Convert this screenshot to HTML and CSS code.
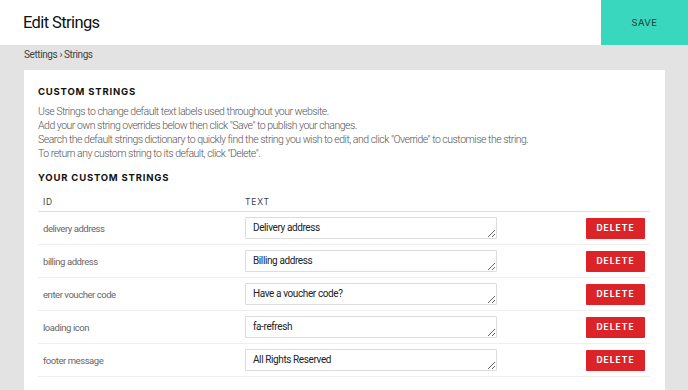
FILE: index.html
```html
<!DOCTYPE html>
<html>

<head>
    <meta charset="utf-8">
    <meta name="viewport" content="width=device-width, initial-scale=1">
    <title>Edit Strings</title>
    <link rel="stylesheet" href="styles.css">
</head>

<body>
    <div class="topbar">
        <h1 class="title">Edit Strings</h1>
        <button class="save">SAVE</button>
    </div>
    <div class="crumbs">Settings &rsaquo; Strings</div>

    <div class="card">
        <h3 class="heading">CUSTOM STRINGS</h3>
        <p class="intro">
            Use Strings to change default text labels used throughout your website.<br>
            Add your own string overrides below then click "Save" to publish your changes.<br>
            Search the default strings dictionary to quickly find the string you wish to edit, and click "Override" to customise the string.<br>
            To return any custom string to its default, click "Delete".
        </p>

        <h3 class="heading second">YOUR CUSTOM STRINGS</h3>
        <table class="strings">
            <thead>
                <tr>
                    <th class="col-id">ID</th>
                    <th class="col-text">TEXT</th>
                    <th></th>
                </tr>
            </thead>
            <tbody>
                <tr>
                    <td>delivery address</td>
                    <td><textarea class="field" rows="1">Delivery address</textarea></td>
                    <td><button class="delete">DELETE</button></td>
                </tr>
                <tr>
                    <td>billing address</td>
                    <td><textarea class="field" rows="1">Billing address</textarea></td>
                    <td><button class="delete">DELETE</button></td>
                </tr>
                <tr>
                    <td>enter voucher code</td>
                    <td><textarea class="field" rows="1">Have a voucher code?</textarea></td>
                    <td><button class="delete">DELETE</button></td>
                </tr>
                <tr>
                    <td>loading icon</td>
                    <td><textarea class="field" rows="1">fa-refresh</textarea></td>
                    <td><button class="delete">DELETE</button></td>
                </tr>
                <tr>
                    <td>footer message</td>
                    <td><textarea class="field" rows="1">All Rights Reserved</textarea></td>
                    <td><button class="delete">DELETE</button></td>
                </tr>
            </tbody>
        </table>
    </div>
</body>

</html>
```

FILE: styles.css
```css
body {
    margin: 0;
    background-color: #e3e3e3;
    font-family: Roboto, "Liberation Sans", sans-serif;
    color: #222;
}

.topbar {
    display: flex;
    align-items: stretch;
    height: 45px;
    background-color: white;
}

.title {
    flex: 1;
    margin: 0;
    padding: 1px 0 0 23px;
    font-size: 16.5px;
    font-weight: 400;
    letter-spacing: -0.6px;
    line-height: 44px;
    color: #111;
}

.save {
    width: 87px;
    border: none;
    background-color: #3ad7bf;
    color: #1d3b36;
    font-family: Inter, sans-serif;
    font-size: 9.5px;
    letter-spacing: 0.4px;
    cursor: pointer;
}

.crumbs {
    padding: 3px 24px 0;
    height: 22px;
    font-size: 10px;
    letter-spacing: -0.4px;
    line-height: 14px;
    color: #444;
}

.card {
    margin: 0 23px 0 24px;
    padding: 15px 15px 20px 14px;
    background-color: white;
}

.heading {
    margin: 0;
    font-family: Inter, sans-serif;
    font-size: 9.5px;
    font-weight: 700;
    letter-spacing: 0.8px;
    line-height: 14px;
    color: #111;
}

.second {
    margin-top: 10px;
}

.intro {
    margin: 6px 0 0;
    font-size: 10.5px;
    font-weight: 300;
    letter-spacing: -0.5px;
    line-height: 14px;
    color: #555;
}

.strings {
    width: 100%;
    margin-top: 5px;
    border-collapse: collapse;
}

.strings th {
    padding: 5px 5px 2px;
    text-align: left;
    font-family: Inter, sans-serif;
    font-size: 8.5px;
    font-weight: 400;
    letter-spacing: 0.8px;
    line-height: 14px;
    color: #444;
    border-bottom: 1px solid #dedede;
}

.col-id {
    width: 192px;
}

.strings td {
    padding: 5px;
    font-size: 9.5px;
    font-weight: 400;
    letter-spacing: -0.45px;
    color: #666;
    border-bottom: 1px solid #efefef;
    vertical-align: middle;
}

.field {
    display: block;
    box-sizing: border-box;
    width: 252px;
    height: 22px;
    padding: 3px 7px;
    border: 1px solid #dcdcdc;
    border-radius: 1px;
    font-family: inherit;
    font-size: 10px;
    letter-spacing: -0.4px;
    line-height: 14px;
    color: #222;
    overflow: hidden;
}

.delete {
    display: block;
    width: 59px;
    height: 21px;
    margin-left: auto;
    border: none;
    border-radius: 1px;
    background-color: #dc2327;
    color: white;
    font-family: Inter, sans-serif;
    font-size: 8.5px;
    font-weight: 700;
    letter-spacing: 1px;
    cursor: pointer;
}
```
